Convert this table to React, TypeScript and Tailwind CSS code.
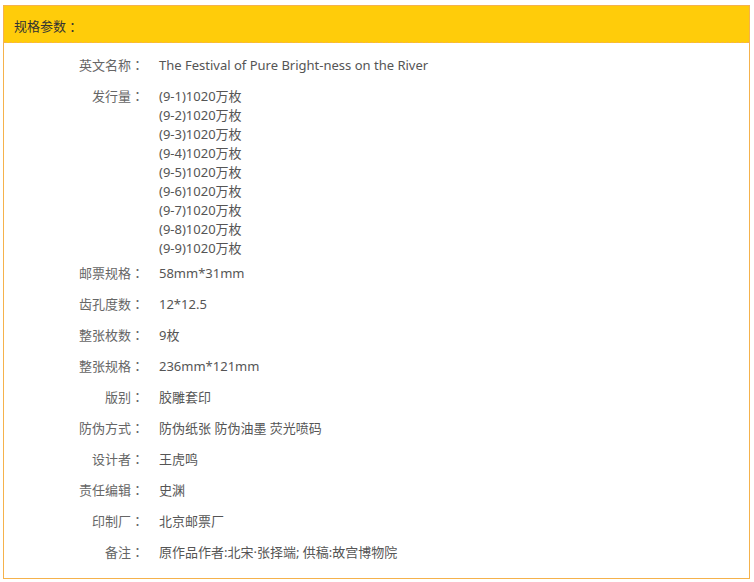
import React from "react";

const rows: { label: string; values: string[] }[] = [
  { label: "英文名称", values: ["The Festival of Pure Bright-ness on the River"] },
  {
    label: "发行量",
    values: [
      "(9-1)1020万枚",
      "(9-2)1020万枚",
      "(9-3)1020万枚",
      "(9-4)1020万枚",
      "(9-5)1020万枚",
      "(9-6)1020万枚",
      "(9-7)1020万枚",
      "(9-8)1020万枚",
      "(9-9)1020万枚",
    ],
  },
  { label: "邮票规格", values: ["58mm*31mm"] },
  { label: "齿孔度数", values: ["12*12.5"] },
  { label: "整张枚数", values: ["9枚"] },
  { label: "整张规格", values: ["236mm*121mm"] },
  { label: "版别", values: ["胶雕套印"] },
  { label: "防伪方式", values: ["防伪纸张 防伪油墨 荧光喷码"] },
  { label: "设计者", values: ["王虎鸣"] },
  { label: "责任编辑", values: ["史渊"] },
  { label: "印制厂", values: ["北京邮票厂"] },
  { label: "备注", values: ["原作品作者:北宋·张择端; 供稿:故宫博物院"] },
];

function Colon() {
  return <span className="font-['Noto_Sans_CJK_TC',sans-serif] leading-[13px]">：</span>;
}

export default function App() {
  return (
    <div className="bg-white w-[754px] h-[582px] pt-[5px] pl-[3px] font-['Noto_Sans','Noto_Sans_CJK_SC',sans-serif]">
      <div className="w-[747px] border border-[#f5b24c]">
        <div className="h-[37px] bg-[#ffcc0a] border-b border-dashed border-[#f5b24c] flex items-center pt-[5px] pl-[10px] text-[13px] text-[#333]">
          <span>规格参数</span>
          <Colon />
        </div>
        <div className="pt-[7px] pb-[10px]">
          {rows.map((r) => (
            <div
              key={r.label}
              className={r.values.length > 1 ? "flex text-[13px] leading-[19px] pt-[6px] pb-0" : "flex text-[13px] leading-[19px] py-[6px]"}
            >
              <div className="w-[140px] h-[19px] shrink-0 text-right text-[#666] whitespace-nowrap">
                {r.label}
                <Colon />
              </div>
              <div className="pl-[15px] text-[#555]">
                {r.values.map((v) => (
                  <div key={v} className="h-[19px] whitespace-nowrap">
                    {v}
                  </div>
                ))}
              </div>
            </div>
          ))}
        </div>
      </div>
    </div>
  );
}
